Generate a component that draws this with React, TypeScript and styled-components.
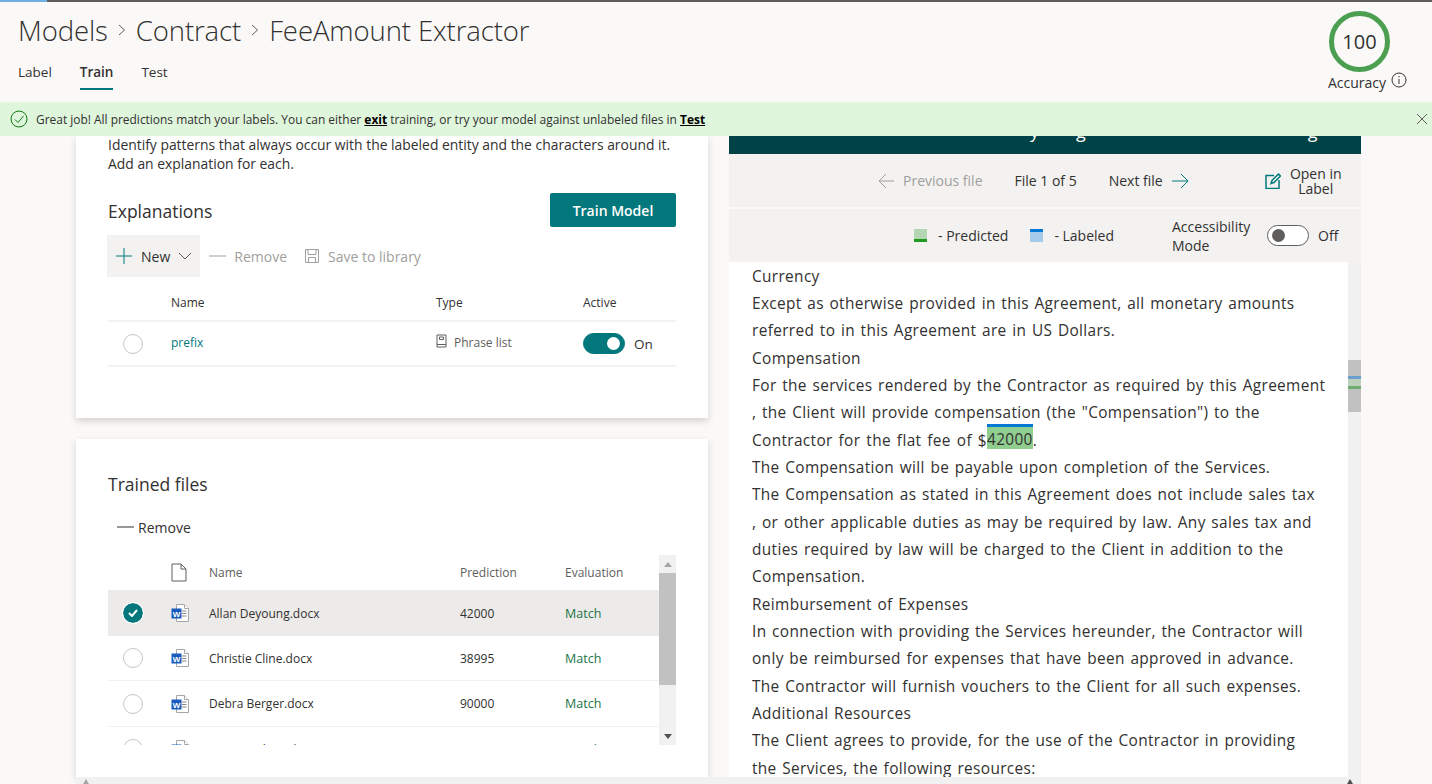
import React from "react";
import styled, { createGlobalStyle } from "styled-components";

const GlobalStyle = createGlobalStyle`
  html, body {
    margin: 0;
    padding: 0;
    height: 100%;
    overflow: hidden;
    background: #faf9f8;
    color: #323130;
    font-family: "Open Sans", "Noto Sans", "Liberation Sans", sans-serif;
  }
  * { box-sizing: border-box; }
`;

const teal = "#03787c";

const Page = styled.div`
  width: 1432px;
  height: 784px;
  display: flex;
  flex-direction: column;
  overflow: hidden;
`;

const TopLine = styled.div`
  height: 2px;
  flex: none;
  background: #605e5c;
  span {
    display: block;
    width: 47px;
    height: 100%;
    background: #71afe5;
  }
`;

const Header = styled.header`
  height: 100px;
  flex: none;
  display: flex;
  justify-content: space-between;
`;

const HeaderLeft = styled.div`
  padding: 9px 0 0 18px;
`;

const Crumbs = styled.div`
  display: flex;
  align-items: center;
  height: 38px;
  font-size: 27.5px;
  font-weight: 300;
  color: #323130;
  letter-spacing: -0.1px;
  svg {
    margin: 0 9px;
  }
`;

const Tabs = styled.nav`
  display: flex;
  gap: 28px;
  margin-top: 8px;
`;

const Tab = styled.a<{ $active?: boolean }>`
  font-size: 13.5px;
  line-height: 30px;
  height: 33px;
  font-weight: ${(p) => (p.$active ? 600 : 400)};
  border-bottom: ${(p) => (p.$active ? `2px solid ${teal}` : "none")};
`;

const AccuracyBox = styled.div`
  width: 104px;
  padding-top: 9px;
  display: flex;
  flex-direction: column;
`;

const Ring = styled.div`
  width: 61px;
  height: 61px;
  margin-left: 1px;
  border: 5px solid #4c9f50;
  border-radius: 50%;
  display: flex;
  align-items: center;
  justify-content: center;
  font-size: 20px;
  color: #323130;
`;

const AccuracyLabel = styled.div`
  display: flex;
  align-items: flex-start;
  gap: 5px;
  margin-top: 1px;
  font-size: 14px;
  line-height: 20px;
  white-space: nowrap;
  svg {
    margin-top: -1px;
  }
`;

const Banner = styled.div`
  height: 34px;
  flex: none;
  background: #dff6dd;
  display: flex;
  align-items: center;
  padding: 0 4px 0 10px;
  font-size: 11.95px;
  color: #323130;
  position: relative;
  z-index: 2;
  b {
    font-weight: 700;
    color: #000;
    text-decoration: underline;
  }
`;

const BannerText = styled.div`
  flex: 1;
  margin-left: 8px;
  white-space: nowrap;
`;

const Main = styled.main`
  flex: 1;
  min-height: 0;
  display: flex;
  flex-direction: column;
`;

const Columns = styled.div`
  flex: 1;
  min-height: 0;
  display: flex;
  gap: 21px;
  padding-left: 76px;
`;

const LeftColumn = styled.div`
  width: 632px;
  display: flex;
  flex-direction: column;
  gap: 21px;
`;

const Card = styled.section<{ $height: number }>`
  height: ${(p) => p.$height}px;
  flex: none;
  background: #fff;
  padding: 0 32px;
  box-shadow: 0 3px 7px rgba(0, 0, 0, 0.16);
`;

const Intro = styled.p`
  margin: -1px 0 0;
  font-size: 13.9px;
  line-height: 19px;
  white-space: nowrap;
`;

const ExplainHead = styled.div`
  display: flex;
  justify-content: space-between;
  align-items: flex-start;
  height: 34px;
  margin-top: 20px;
`;

const SectionTitle = styled.h2`
  margin: 0;
  font-size: 17.5px;
  font-weight: 400;
  line-height: 36px;
`;

const PrimaryButton = styled.button`
  width: 126px;
  height: 34px;
  border: none;
  border-radius: 2px;
  background: ${teal};
  color: #fff;
  font: 600 14px "Open Sans", sans-serif;
`;

const CommandBar = styled.div`
  display: flex;
  align-items: center;
  height: 42px;
  margin: 8px 0 13px -1px;
`;

const Command = styled.div<{ $disabled?: boolean; $filled?: boolean }>`
  display: flex;
  align-items: center;
  height: 100%;
  gap: 8px;
  padding: 0 8px;
  font-size: 14px;
  white-space: nowrap;
  color: ${(p) => (p.$disabled ? "#a19f9d" : "#323130")};
  background: ${(p) => (p.$filled ? "#f3f2f1" : "transparent")};
  & + & {
    margin-left: 1px;
  }
`;

const ExplainRow = styled.div<{ $head?: boolean }>`
  display: grid;
  grid-template-columns: 63px 265px 147px 1fr;
  align-items: center;
  height: ${(p) => (p.$head ? 32 : 45)}px;
  padding-bottom: ${(p) => (p.$head ? 6 : 0)}px;
  border-bottom: 2px solid #f3f2f1;
  font-size: 12px;
`;

const Radio = styled.span`
  display: block;
  width: 20px;
  height: 20px;
  margin-left: 15px;
  border-radius: 50%;
  border: 1.5px solid #c8c6c4;
  background: #fff;
`;

const CheckedRadio = styled.span`
  display: flex;
  align-items: center;
  justify-content: center;
  width: 20px;
  height: 20px;
  margin-left: 15px;
  border-radius: 50%;
  background: ${teal};
  outline: 1px solid #fff;
`;

const LinkText = styled.a`
  color: ${teal};
  margin-bottom: 2px;
`;

const TypeCell = styled.div`
  display: flex;
  align-items: center;
  gap: 7px;
  margin-bottom: 2px;
  color: #605e5c;
  svg {
    margin-top: -3px;
  }
`;

const ToggleWrap = styled.div`
  display: flex;
  align-items: center;
  gap: 9px;
  font-size: 13.5px;
`;

const Toggle = styled.span<{ $on?: boolean }>`
  width: 42px;
  height: 21px;
  flex: none;
  display: flex;
  align-items: center;
  justify-content: ${(p) => (p.$on ? "flex-end" : "flex-start")};
  padding: 0 4px;
  border-radius: 11px;
  background: ${(p) => (p.$on ? teal : "#fff")};
  border: 1px solid ${(p) => (p.$on ? teal : "#605e5c")};
  &::after {
    content: "";
    width: 13px;
    height: 13px;
    border-radius: 50%;
    background: ${(p) => (p.$on ? "#fff" : "#605e5c")};
  }
`;

const TrainedTitle = styled(SectionTitle)`
  margin-top: 27px;
`;

const RemoveBar = styled.div`
  display: flex;
  align-items: center;
  gap: 4px;
  height: 24px;
  margin: 13px 0 16px 9px;
  font-size: 14px;
`;

const FilesArea = styled.div`
  height: 190px;
  display: flex;
`;

const FilesList = styled.div`
  flex: 1;
  overflow: hidden;
`;

const FileRow = styled.div<{ $selected?: boolean; $head?: boolean }>`
  display: grid;
  grid-template-columns: 63px 38px 251px 105px 1fr;
  align-items: center;
  height: ${(p) => (p.$head ? 35 : 45.5)}px;
  padding-top: ${(p) => (p.$head ? 0 : 1)}px;
  font-size: 12px;
  color: ${(p) => (p.$head ? "#605e5c" : "#323130")};
  background: ${(p) => (p.$selected ? "#edebe9" : "transparent")};
  border-bottom: ${(p) => (p.$selected || p.$head ? "none" : "1px solid #f3f2f1")};
`;

const MatchText = styled.span`
  color: #217346;
  font-size: 12.5px;
`;

const ListScroll = styled.div`
  width: 17px;
  display: flex;
  flex-direction: column;
  align-items: stretch;
  background: #f1f1f1;
  span {
    flex: none;
    height: 18px;
    display: flex;
    align-items: center;
    justify-content: center;
  }
  i {
    flex: none;
    display: block;
    height: 112px;
    background: #c1c1c1;
  }
  div {
    flex: 1;
  }
`;

const RightColumn = styled.div`
  width: 632px;
  height: 641px;
  display: flex;
  flex-direction: column;
`;

const DarkBar = styled.div`
  height: 18px;
  flex: none;
  background: #004346;
  overflow: hidden;
  color: #fff;
  font-size: 18px;
  line-height: 20px;
  display: flex;
  padding-left: 301px;
  span {
    display: block;
    margin-top: -15px;
  }
  span:nth-child(2) {
    margin-left: 37px;
  }
  span:nth-child(3) {
    margin-left: 222px;
  }
`;

const FileNav = styled.div`
  height: 53px;
  flex: none;
  background: #f3f2f1;
  display: flex;
  align-items: center;
  padding-left: 149px;
  font-size: 14px;
  white-space: nowrap;
`;

const NavItem = styled.span<{ $muted?: boolean; $gap: number }>`
  display: flex;
  align-items: center;
  gap: 9px;
  margin-right: ${(p) => p.$gap}px;
  color: ${(p) => (p.$muted ? "#a19f9d" : "#323130")};
`;

const OpenLabel = styled.span`
  width: 52px;
  margin-left: 9px;
  text-align: center;
  line-height: 15px;
  white-space: normal;
`;

const LegendBar = styled.div`
  height: 53px;
  flex: none;
  margin-top: 2px;
  background: #f3f2f1;
  display: flex;
  align-items: center;
  padding-left: 185px;
  font-size: 14px;
  white-space: nowrap;
`;

const Swatch = styled.span<{ $kind: "predicted" | "labeled" }>`
  width: 13px;
  height: 13px;
  margin-right: 11px;
  flex: none;
  background: ${(p) => (p.$kind === "predicted" ? "#b5d6b2" : "#a6cbea")};
  border-top: ${(p) => (p.$kind === "labeled" ? "3px solid #0078d4" : "none")};
  border-bottom: ${(p) => (p.$kind === "predicted" ? "3px solid #1e9a1e" : "none")};
`;

const LegendText = styled.span<{ $gap: number }>`
  margin-right: ${(p) => p.$gap}px;
`;

const AccessText = styled.span`
  width: 95px;
  line-height: 19px;
  white-space: normal;
`;

const OffText = styled.span`
  margin-left: 9px;
`;

const DocArea = styled.div`
  flex: 1;
  min-height: 0;
  display: flex;
`;

const DocBody = styled.div`
  flex: 1;
  background: #fff;
  padding: 0.5px 0 0 23px;
  overflow: hidden;
  font-size: 15.4px;
  line-height: 27.35px;
  letter-spacing: 0.35px;
  word-spacing: 1.3px;
  white-space: nowrap;
  color: #323130;
`;

const FeeLine = styled.div`
  word-spacing: 1.6px;
`;

const Highlight = styled.span`
  display: inline-block;
  vertical-align: top;
  height: 25px;
  margin-top: -3px;
  background: #8fce8f;
  border-top: 3px solid #0078d4;
  line-height: 26px;
`;

const DocScroll = styled.div`
  width: 13px;
  flex: none;
  background: #f1f1f1;
  padding-top: 98px;
`;

const DocThumb = styled.div`
  height: 52px;
  background: #c1c1c1;
  padding-top: 16px;
  span {
    display: block;
    height: 3px;
  }
  span:first-child {
    background: #6c9fcf;
  }
  span:nth-child(2) {
    height: 7px;
    background: #bcd0bc;
  }
  span:last-child {
    background: #6fae6f;
  }
`;

const BottomScroll = styled.div`
  height: 7px;
  flex: none;
  margin: 0 71px 0 76px;
  background: #f1f1f1;
  padding: 2px 8px 0 7px;
  display: flex;
  justify-content: space-between;
  align-items: flex-start;
  position: relative;
  z-index: 1;
`;

const Chevron = () => (
  <svg width="10" height="16" viewBox="0 0 10 16" fill="none" stroke="#605e5c" strokeWidth="1">
    <path d="M2 3l5.5 5L2 13" />
  </svg>
);

const WordIcon = () => (
  <svg width="19" height="20" viewBox="0 0 19 20">
    <path d="M5.5 1.5h8l4 4v13h-12z" fill="#fff" stroke="#a6a6a6" />
    <path d="M13.5 1.5v4h4" fill="#fff" stroke="#a6a6a6" />
    <path d="M11 8h4.5M11 10.5h4.5M11 13h4.5" stroke="#8a8886" />
    <rect x="0.5" y="5.5" width="10" height="10" fill="#185abd" />
    <text x="5.5" y="13.5" fontSize="8" fontWeight="700" fill="#fff" textAnchor="middle" fontFamily="Liberation Sans">W</text>
  </svg>
);

const docStart = [
  "Currency",
  "Except as otherwise provided in this Agreement, all monetary amounts",
  "referred to in this Agreement are in US Dollars.",
  "Compensation",
  "For the services rendered by the Contractor as required by this Agreement",
  ", the Client will provide compensation (the \"Compensation\") to the",
];

const docRest = [
  "The Compensation will be payable upon completion of the Services.",
  "The Compensation as stated in this Agreement does not include sales tax",
  ", or other applicable duties as may be required by law. Any sales tax and",
  "duties required by law will be charged to the Client in addition to the",
  "Compensation.",
  "Reimbursement of Expenses",
  "In connection with providing the Services hereunder, the Contractor will",
  "only be reimbursed for expenses that have been approved in advance.",
  "The Contractor will furnish vouchers to the Client for all such expenses.",
  "Additional Resources",
  "The Client agrees to provide, for the use of the Contractor in providing",
  "the Services, the following resources:",
];

const files = [
  { name: "Allan Deyoung.docx", prediction: "42000", selected: true },
  { name: "Christie Cline.docx", prediction: "38995" },
  { name: "Debra Berger.docx", prediction: "90000" },
  { name: "Diego Siciliani.docx", prediction: "75000" },
];

export default function App() {
  return (
    <Page>
      <GlobalStyle />
      <TopLine>
        <span />
      </TopLine>
      <Header>
        <HeaderLeft>
          <Crumbs>
            Models
            <Chevron />
            Contract
            <Chevron />
            FeeAmount Extractor
          </Crumbs>
          <Tabs>
            <Tab>Label</Tab>
            <Tab $active>Train</Tab>
            <Tab>Test</Tab>
          </Tabs>
        </HeaderLeft>
        <AccuracyBox>
          <Ring>100</Ring>
          <AccuracyLabel>
            Accuracy
            <svg width="16" height="16" viewBox="0 0 16 16" fill="none" stroke="#323130">
              <circle cx="8" cy="8" r="7" />
              <path d="M8 7v5M8 4v1.4" />
            </svg>
          </AccuracyLabel>
        </AccuracyBox>
      </Header>
      <Banner>
        <svg width="18" height="18" viewBox="0 0 18 18" fill="none" stroke="#107c10">
          <circle cx="9" cy="9" r="8" />
          <path d="M5 9.5l3 3 5.5-6.5" />
        </svg>
        <BannerText>
          Great job! All predictions match your labels. You can either <b>exit</b> training, or try your model against unlabeled files in <b>Test</b>
        </BannerText>
        <svg width="12" height="12" viewBox="0 0 12 12" stroke="#605e5c" fill="none">
          <path d="M1 1l10 10M11 1L1 11" />
        </svg>
      </Banner>
      <Main>
        <Columns>
          <LeftColumn>
            <Card $height={282}>
              <Intro>
                Identify patterns that always occur with the labeled entity and the characters around it.
                <br />
                Add an explanation for each.
              </Intro>
              <ExplainHead>
                <SectionTitle>Explanations</SectionTitle>
                <PrimaryButton>Train Model</PrimaryButton>
              </ExplainHead>
              <CommandBar>
                <Command $filled>
                  <svg width="18" height="18" viewBox="0 0 18 18" stroke={teal} fill="none">
                    <path d="M9 1v16M1 9h16" />
                  </svg>
                  New
                  <svg width="14" height="8" viewBox="0 0 14 8" stroke="#605e5c" fill="none">
                    <path d="M1 1l6 6 6-6" />
                  </svg>
                </Command>
                <Command $disabled>
                  <svg width="17" height="2" viewBox="0 0 17 2" stroke="#a19f9d">
                    <path d="M0 1h17" />
                  </svg>
                  Remove
                </Command>
                <Command $disabled>
                  <svg width="16" height="16" viewBox="0 0 16 16" stroke="#a19f9d" fill="none">
                    <path d="M1.5 1.5h13v13h-13zM4 1.5v5h8v-5M4.5 14.5v-5h7v5" />
                  </svg>
                  Save to library
                </Command>
              </CommandBar>
              <ExplainRow $head>
                <span />
                <span>Name</span>
                <span>Type</span>
                <span>Active</span>
              </ExplainRow>
              <ExplainRow>
                <Radio />
                <LinkText>prefix</LinkText>
                <TypeCell>
                  <svg width="11" height="14" viewBox="0 0 11 14" stroke="#605e5c" fill="none">
                    <path d="M1 1h9v12H1zM1 10.5h9M3.5 3h4v2.5h-4z" />
                  </svg>
                  Phrase list
                </TypeCell>
                <ToggleWrap>
                  <Toggle $on />
                  On
                </ToggleWrap>
              </ExplainRow>
            </Card>
            <Card $height={338}>
              <TrainedTitle>Trained files</TrainedTitle>
              <RemoveBar>
                <svg width="17" height="2" viewBox="0 0 17 2" stroke="#323130">
                  <path d="M0 1h17" />
                </svg>
                Remove
              </RemoveBar>
              <FilesArea>
                <FilesList>
                  <FileRow $head>
                    <span />
                    <svg width="16" height="19" viewBox="0 0 16 19" stroke="#605e5c" fill="none">
                      <path d="M1 1h9l5 5v12H1zM10 1v5h5" />
                    </svg>
                    <span>Name</span>
                    <span>Prediction</span>
                    <span>Evaluation</span>
                  </FileRow>
                  {files.map((f) => (
                    <FileRow key={f.name} $selected={f.selected}>
                      {f.selected ? (
                        <CheckedRadio>
                          <svg width="10" height="8" viewBox="0 0 10 8" stroke="#fff" strokeWidth="2" fill="none">
                            <path d="M1 4l3 3 5-6" />
                          </svg>
                        </CheckedRadio>
                      ) : (
                        <Radio />
                      )}
                      <WordIcon />
                      <span>{f.name}</span>
                      <span>{f.prediction}</span>
                      <MatchText>Match</MatchText>
                    </FileRow>
                  ))}
                </FilesList>
                <ListScroll>
                  <span>
                    <svg width="8" height="5" viewBox="0 0 8 5" fill="#a6a6a6">
                      <path d="M4 0l4 5H0z" />
                    </svg>
                  </span>
                  <i />
                  <div />
                  <span>
                    <svg width="8" height="5" viewBox="0 0 8 5" fill="#505050">
                      <path d="M4 5l4-5H0z" />
                    </svg>
                  </span>
                </ListScroll>
              </FilesArea>
            </Card>
          </LeftColumn>
          <RightColumn>
            <DarkBar>
              <span>y</span>
              <span>g</span>
              <span>g</span>
            </DarkBar>
            <FileNav>
              <NavItem $muted $gap={32}>
                <svg width="16" height="16" viewBox="0 0 16 16" stroke="#a19f9d" fill="none">
                  <path d="M16 8H1M8 1L1 8l7 7" />
                </svg>
                Previous file
              </NavItem>
              <NavItem $gap={32}>File 1 of 5</NavItem>
              <NavItem $gap={76}>
                Next file
                <svg width="17" height="16" viewBox="0 0 17 16" stroke={teal} fill="none">
                  <path d="M0 8h16M9 1l7 7-7 7" />
                </svg>
              </NavItem>
              <svg width="16" height="16" viewBox="0 0 16 16" stroke={teal} fill="none" strokeWidth="1.5">
                <path d="M9 2.5H1v13h13V7M6 10.5l1-3 6.5-6.5 2 2L9 9.5z" />
              </svg>
              <OpenLabel>Open in Label</OpenLabel>
            </FileNav>
            <LegendBar>
              <Swatch $kind="predicted" />
              <LegendText $gap={22}>- Predicted</LegendText>
              <Swatch $kind="labeled" />
              <LegendText $gap={58}>- Labeled</LegendText>
              <AccessText>Accessibility Mode</AccessText>
              <Toggle />
              <OffText>Off</OffText>
            </LegendBar>
            <DocArea>
              <DocBody>
                {docStart.map((line) => (
                  <div key={line}>{line}</div>
                ))}
                <FeeLine>
                  Contractor for the flat fee of $<Highlight>42000</Highlight>.
                </FeeLine>
                {docRest.map((line) => (
                  <div key={line}>{line}</div>
                ))}
              </DocBody>
              <DocScroll>
                <DocThumb>
                  <span />
                  <span />
                  <span />
                </DocThumb>
              </DocScroll>
            </DocArea>
          </RightColumn>
        </Columns>
        <BottomScroll>
          <svg width="6" height="5" viewBox="0 0 6 5" fill="#a6a6a6">
            <path d="M3 0l3 5H0z" />
          </svg>
          <svg width="6" height="5" viewBox="0 0 6 5" fill="#505050">
            <path d="M3 0l3 5H0z" />
          </svg>
        </BottomScroll>
      </Main>
    </Page>
  );
}
